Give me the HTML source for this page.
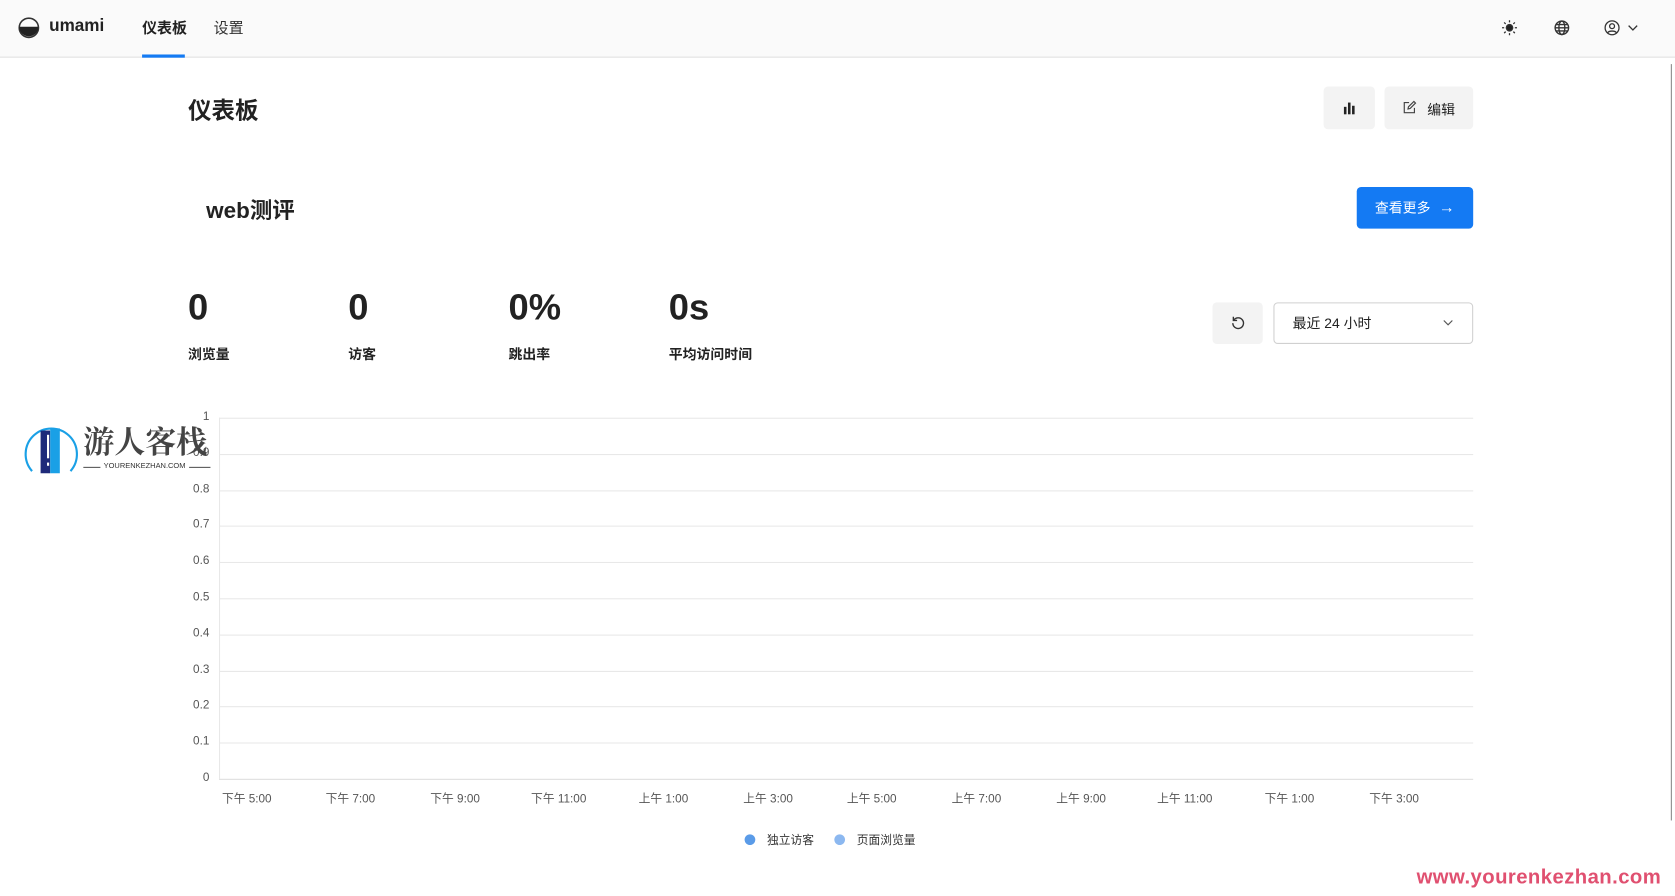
<!DOCTYPE html>
<html><head><meta charset="utf-8"><style>
*{box-sizing:border-box;margin:0;padding:0}
html,body{width:1675px;height:896px;background:#fff;overflow:hidden}
#w{position:absolute;left:0;top:0;width:1568px;height:839px;transform:scale(1.0683);transform-origin:0 0;font-family:"Liberation Sans","Noto Sans CJK SC",sans-serif;color:#222}
.hdr{position:absolute;left:0;top:0;width:1568px;height:54px;background:#fafafa;border-bottom:1px solid #e1e1e1}
.abs{position:absolute}
.btn{position:absolute;background:#f3f3f3;border-radius:4px}
.grid{position:absolute;left:205px;width:1174px;height:1px;background:#e8e8e8}
.yl{position:absolute;left:166px;font-size:11px;color:#555;width:30px;text-align:right}
.xl{position:absolute;top:739px;font-size:11px;color:#555;width:80px;text-align:center}
</style></head><body><div id="w">
<div class="hdr"></div>
<svg class="abs" style="left:17px;top:16px" width="20" height="20" viewBox="0 0 20 20"><circle cx="10" cy="10" r="9" fill="none" stroke="#333" stroke-width="1.5"/><path d="M1 9 H19 A9 9 0 0 1 1 9Z" fill="#222"/></svg>
<div class="abs" style="left:46px;top:16px;font-size:16px;font-weight:bold;color:#222">umami</div>
<div class="abs" style="left:133px;top:16px;font-size:14px;font-weight:bold">仪表板</div>
<div class="abs" style="left:133px;top:51px;width:40px;height:3px;background:#147af3"></div>
<div class="abs" style="left:200px;top:16px;font-size:14px;color:#333">设置</div>
<svg class="abs" style="left:1405px;top:18px" width="16" height="16" viewBox="0 0 16 16" stroke="#333" stroke-width="1.2"><circle cx="8" cy="8" r="3" fill="#222"/><path d="M8 1v2M8 13v2M1 8h2M13 8h2M3 3l1.4 1.4M11.6 11.6L13 13M3 13l1.4-1.4M11.6 4.4L13 3"/></svg>
<svg class="abs" style="left:1454px;top:18px" width="16" height="16" viewBox="0 0 16 16" fill="none" stroke="#333" stroke-width="1.3"><circle cx="8" cy="8" r="6.3"/><ellipse cx="8" cy="8" rx="2.8" ry="6.3"/><path d="M1.7 8h12.6M2.5 5h11M2.5 11h11"/></svg>
<svg class="abs" style="left:1501px;top:18px" width="16" height="16" viewBox="0 0 16 16" fill="none" stroke="#333" stroke-width="1.2"><circle cx="8" cy="8" r="6.5"/><circle cx="8" cy="6.5" r="2.3"/><path d="M3.8 12.8C5 10.5 11 10.5 12.2 12.8"/></svg>
<svg class="abs" style="left:1523px;top:22px" width="11" height="8" viewBox="0 0 11 8" fill="none" stroke="#333" stroke-width="1.2"><path d="M1.5 2l4 4 4-4"/></svg>
<div class="abs" style="left:1564px;top:60px;width:1px;height:708px;background:#888"></div>

<div class="abs" style="left:176px;top:86px;font-size:22px;font-weight:bold">仪表板</div>
<div class="btn" style="left:1239px;top:81px;width:48px;height:40px"></div>
<svg class="abs" style="left:1256px;top:94px" width="14" height="14" viewBox="0 0 14 14" fill="#222"><rect x="2" y="6" width="2.4" height="7"/><rect x="5.8" y="2" width="2.4" height="11"/><rect x="9.6" y="5" width="2.4" height="8"/></svg>
<div class="btn" style="left:1296px;top:81px;width:83px;height:40px"></div>
<svg class="abs" style="left:1313px;top:94px" width="13" height="13" viewBox="0 0 13 13" fill="none" stroke="#444" stroke-width="1.1"><path d="M6 2H1.5v9.5H11V7"/><path d="M5 8l.4-2L10.5 1l1.5 1.5L7 7.5z"/></svg>
<div class="abs" style="left:1336px;top:92px;font-size:13px;color:#222">编辑</div>

<div class="abs" style="left:193px;top:181px;font-size:21px;font-weight:bold">web测评</div>
<div class="abs" style="left:1270px;top:175px;width:109px;height:39px;background:#147af3;border-radius:4px;color:#fff;font-size:13px;line-height:39px;padding-left:17px">查看更多 <span style="font-size:15px;margin-left:4px">→</span></div>

<div class="abs" style="left:176px;top:269px;font-size:34px;font-weight:bold">0</div>
<div class="abs" style="left:326px;top:269px;font-size:34px;font-weight:bold">0</div>
<div class="abs" style="left:476px;top:269px;font-size:34px;font-weight:bold">0%</div>
<div class="abs" style="left:626px;top:269px;font-size:34px;font-weight:bold">0s</div>
<div class="abs" style="left:176px;top:321px;font-size:13px;font-weight:bold">浏览量</div>
<div class="abs" style="left:326px;top:321px;font-size:13px;font-weight:bold">访客</div>
<div class="abs" style="left:476px;top:321px;font-size:13px;font-weight:bold">跳出率</div>
<div class="abs" style="left:626px;top:321px;font-size:13px;font-weight:bold">平均访问时间</div>

<div class="btn" style="left:1135px;top:283px;width:47px;height:39px"></div>
<svg class="abs" style="left:1152px;top:295px" width="14" height="14" viewBox="0 0 14 14" fill="none" stroke="#333" stroke-width="1.3"><path d="M3 4.5A5 5 0 1 1 2 7.5"/><path d="M2.5 1.5v3.5H6"/></svg>
<div class="abs" style="left:1192px;top:283px;width:187px;height:39px;border:1px solid #d0d0d0;border-radius:4px;font-size:13px;line-height:37px;padding-left:17px">最近 24 小时</div>
<svg class="abs" style="left:1350px;top:298px" width="11" height="8" viewBox="0 0 11 8" fill="none" stroke="#555" stroke-width="1.1"><path d="M1.5 2l4 4 4-4"/></svg>

<div class="abs" style="left:205px;top:391px;width:1px;height:338px;background:#e8e8e8"></div>
<div class="grid" style="top:391px"></div><div class="grid" style="top:425px"></div><div class="grid" style="top:459px"></div><div class="grid" style="top:492px"></div><div class="grid" style="top:526px"></div><div class="grid" style="top:560px"></div><div class="grid" style="top:594px"></div><div class="grid" style="top:628px"></div><div class="grid" style="top:661px"></div><div class="grid" style="top:695px"></div><div class="grid" style="top:729px;background:#ddd"></div>
<div class="yl" style="top:384px">1</div><div class="yl" style="top:418px">0.9</div><div class="yl" style="top:452px">0.8</div><div class="yl" style="top:485px">0.7</div><div class="yl" style="top:519px">0.6</div><div class="yl" style="top:553px">0.5</div><div class="yl" style="top:587px">0.4</div><div class="yl" style="top:621px">0.3</div><div class="yl" style="top:654px">0.2</div><div class="yl" style="top:688px">0.1</div><div class="yl" style="top:722px">0</div>
<div class="xl" style="left:191px">下午 5:00</div><div class="xl" style="left:288px">下午 7:00</div><div class="xl" style="left:386px">下午 9:00</div><div class="xl" style="left:483px">下午 11:00</div><div class="xl" style="left:581px">上午 1:00</div><div class="xl" style="left:679px">上午 3:00</div><div class="xl" style="left:776px">上午 5:00</div><div class="xl" style="left:874px">上午 7:00</div><div class="xl" style="left:972px">上午 9:00</div><div class="xl" style="left:1069px">上午 11:00</div><div class="xl" style="left:1167px">下午 1:00</div><div class="xl" style="left:1265px">下午 3:00</div>

<div class="abs" style="left:697px;top:781px;width:10px;height:10px;border-radius:50%;background:#5a9be8"></div>
<div class="abs" style="left:718px;top:778px;font-size:11px;color:#333">独立访客</div>
<div class="abs" style="left:781px;top:781px;width:10px;height:10px;border-radius:50%;background:#8cb8f0"></div>
<div class="abs" style="left:802px;top:778px;font-size:11px;color:#333">页面浏览量</div>

<svg class="abs" style="left:22px;top:397px" width="52" height="48" viewBox="0 0 52 48"><path d="M8 44A24 24 0 1 1 44 44" fill="none" stroke="#1aa0e6" stroke-width="2"/><rect x="16" y="6" width="9" height="40" fill="#1e2a7a"/><rect x="25" y="4" width="9" height="42" fill="#1aa0e6"/><rect x="22" y="10" width="2" height="22" fill="#fff"/><rect x="22" y="36" width="2" height="3" fill="#fff"/></svg>
<div class="abs" style="left:78px;top:392px;font-family:'Noto Serif CJK SC',serif;font-size:29px;font-weight:bold;color:#444;letter-spacing:0">游人客栈</div>
<div class="abs" style="left:78px;top:437px;width:119px;height:1px;background:#555"></div>
<div class="abs" style="left:94px;top:433px;font-size:7px;color:#333;background:#fff;padding:0 3px">YOURENKEZHAN.COM</div>

<div class="abs" style="left:1326px;top:811px;font-size:19px;font-weight:bold;color:#e05070;letter-spacing:0.4px">www.yourenkezhan.com</div>
</div></body></html>
